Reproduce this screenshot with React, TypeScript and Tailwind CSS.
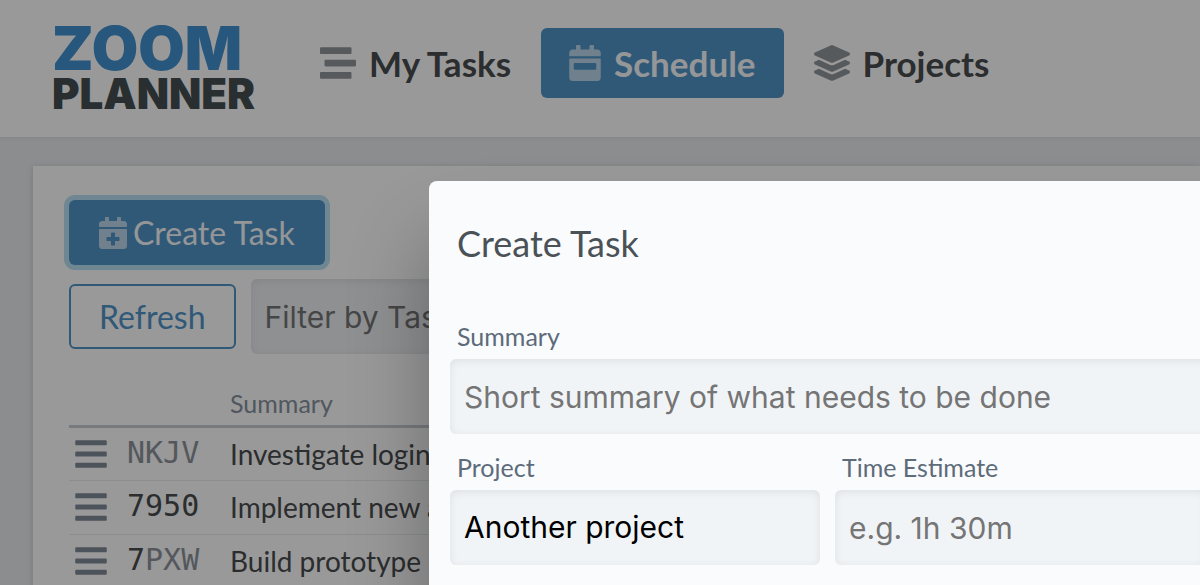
import React, { useState } from 'react';
import {
  FaBars,
  FaCalendarPlus,
  FaCalendarWeek,
  FaLayerGroup,
  FaStream,
} from 'react-icons/fa';

interface Task {
  prefix: string; // Typed part of the id, drawn dark
  rest: string;   // Remainder of the id, drawn muted
  summary: string;
}

const TASKS: Task[] = [
  { prefix: '', rest: 'NKJV', summary: 'Investigate login issues' },
  { prefix: '7950', rest: '', summary: 'Implement new account page' },
  { prefix: '7', rest: 'PXW', summary: 'Build prototype' },
];

const FIELD =
  "h-[75px] w-full appearance-none rounded-md bg-[#f1f4f7] px-3.5 font-['Inter',sans-serif] text-[30px] text-black shadow-[inset_0_2px_8px_rgba(0,0,0,0.08)] outline-none placeholder:text-[#757575]";

const LABEL = 'block px-[7px] text-[25px] leading-8 text-[#5d6b7a]';

function Header() {
  return (
    <header className="relative flex h-[137px] items-start bg-white shadow-[0_1px_4px_rgba(0,0,0,0.06)]">
      <a href="#" className="ml-[52px] mt-5 w-[240px] shrink-0 font-['Inter',sans-serif] font-black">
        <span className="block text-[60px] leading-[56px] text-[#4191d0]">ZOOM</span>
        <span className="block text-[42px] leading-9 text-[#454f50]">PLANNER</span>
      </a>
      <nav className="mt-7 flex gap-0.5 text-[35px] font-bold text-[#484b4e]">
        <a href="#" className="flex h-[70px] items-center gap-[13px] rounded-md px-7">
          <FaStream className="size-9 text-[#92979b]" />
          My Tasks
        </a>
        <a href="#" className="flex h-[70px] items-center gap-[13px] rounded-md bg-[#5094c9] px-7 text-[#f8fafc]">
          <FaCalendarWeek className="h-9 w-8 text-[#bdd6eb]" />
          Schedule
        </a>
        <a href="#" className="flex h-[70px] items-center gap-[13px] rounded-md px-7">
          <FaLayerGroup className="size-9 text-[#92979b]" />
          Projects
        </a>
      </nav>
    </header>
  );
}

function TaskTable() {
  return (
    <table className="mt-[31px] w-full table-fixed text-left">
      <colgroup>
        <col className="w-[58px]" />
        <col className="w-[103px]" />
        <col />
      </colgroup>
      <thead>
        <tr className="h-[41px] border-b-3 border-[#c9ced3]">
          <th />
          <th />
          <th className="pb-1 text-[25px] leading-8 font-normal text-[#87919d]">Summary</th>
        </tr>
      </thead>
      <tbody>
        {TASKS.map((task) => (
          <tr key={task.summary} className="h-[54px] border-b border-[#e9ecef]">
            <td className="pl-1.5">
              <FaBars className="h-9 w-8 text-[#818b97]" />
            </td>
            <td className="pb-0.5 font-['DejaVu_Sans_Mono',monospace] text-[30px] leading-9 text-[#484b4e]">
              {task.prefix}
              <span className="text-[#8c939c]">{task.rest}</span>
            </td>
            <td className="truncate text-[28px] leading-9 text-[#484b4e]">{task.summary}</td>
          </tr>
        ))}
      </tbody>
    </table>
  );
}

function CreateTaskDialog() {
  const [project, setProject] = useState('Another project');

  return (
    <div className="absolute inset-0 overflow-hidden bg-black/40 pt-[181px] pl-[429px]">
      <div
        role="dialog"
        aria-labelledby="dialog-title"
        className="min-h-screen w-[1182px] rounded-lg bg-[#fafbfd] px-[21px] pt-[38px] shadow-[0_60px_80px_rgba(0,0,0,0.3)]"
      >
        <h2 id="dialog-title" className="px-[7px] text-4xl leading-12 text-[#4a5257]">
          Create Task
        </h2>
        <form className="mt-[53px]">
          <label htmlFor="summary" className={LABEL}>
            Summary
          </label>
          <input
            id="summary"
            type="text"
            placeholder="Short summary of what needs to be done"
            className={`mt-[7px] ${FIELD}`}
          />
          <div className="mt-[17px] grid grid-cols-3 gap-[15px]">
            <div>
              <label htmlFor="project" className={LABEL}>
                Project
              </label>
              <select
                id="project"
                value={project}
                onChange={(e) => setProject(e.target.value)}
                className={`mt-[7px] ${FIELD}`}
              >
                <option>Another project</option>
              </select>
            </div>
            <div>
              <label htmlFor="estimate" className={LABEL}>
                Time Estimate
              </label>
              <input
                id="estimate"
                type="text"
                placeholder="e.g. 1h 30m"
                className={`mt-[7px] ${FIELD}`}
              />
            </div>
          </div>
        </form>
      </div>
    </div>
  );
}

export default function App() {
  return (
    <div className="relative h-screen overflow-hidden bg-[#e9ebef] font-['Lato',sans-serif]">
      <Header />
      <main className="mt-[29px] ml-[33px] min-h-screen bg-white pt-[34px] pl-9 shadow-[0_1px_6px_rgba(0,0,0,0.15)]">
        <button
          type="button"
          className="flex h-[65px] items-center gap-1.5 rounded-md bg-[#5094c9] px-[30px] text-[32px] text-[#f8fafc] ring-5 ring-[#b9dff5]"
        >
          <FaCalendarPlus className="h-8 w-7 text-[#bdd6eb]" />
          Create Task
        </button>
        <div className="mt-3.5 flex items-center gap-[15px]">
          <button
            type="button"
            className="h-[65px] rounded-md border-2 border-[#5094c9] px-7 text-[32px] text-[#5094c9]"
          >
            Refresh
          </button>
          <input
            type="text"
            aria-label="Filter by Task"
            placeholder="Filter by Task"
            className="h-[75px] flex-1 rounded-md bg-[#edf0f3] px-3.5 font-['Inter',sans-serif] text-[30px] shadow-[inset_0_2px_8px_rgba(0,0,0,0.08)] outline-none placeholder:text-[#757575]"
          />
        </div>
        <TaskTable />
      </main>
      <CreateTaskDialog />
    </div>
  );
}
